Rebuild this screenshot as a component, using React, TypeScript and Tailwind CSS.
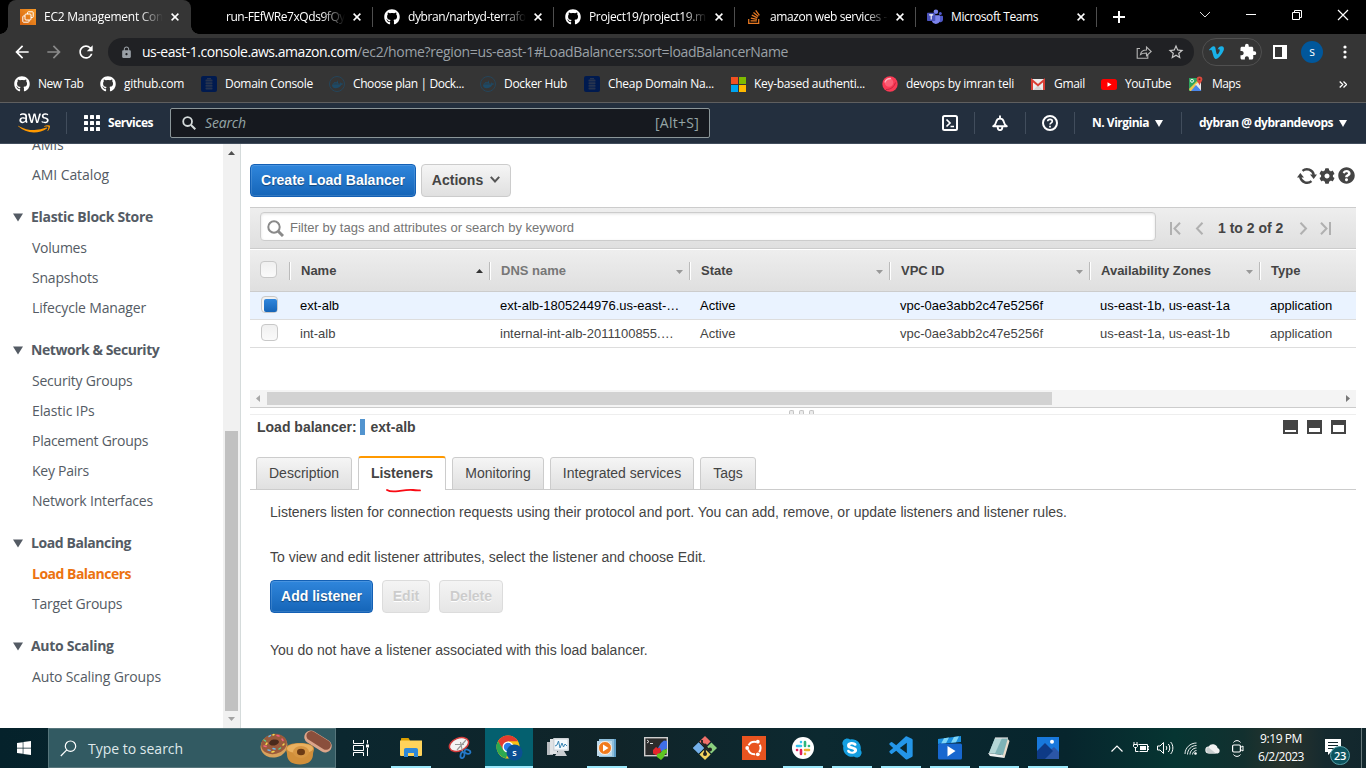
import React from "react";
import { FaGithub, FaAws, FaStackOverflow, FaDocker, FaVimeoV, FaSkype, FaCog, FaQuestionCircle, FaWindows } from "react-icons/fa";
import { MdArrowBack, MdArrowForward, MdRefresh, MdLock, MdStarBorder, MdExtension } from "react-icons/md";
import { BiLogoVisualStudio } from "react-icons/bi";

const ui = "font-['Open_Sans','Noto_Sans',sans-serif]";

/* ---------- small drawings ---------- */

const Ec2Icon = () => (
  <svg className="w-4 h-4" viewBox="0 0 16 16">
    <defs>
      <linearGradient id="ec2" x1="0" y1="1" x2="1" y2="0">
        <stop offset="0" stopColor="#d4620f" />
        <stop offset="1" stopColor="#f79a28" />
      </linearGradient>
    </defs>
    <rect width="16" height="16" fill="url(#ec2)" />
    <g fill="none" stroke="#fff" strokeWidth="1">
      <path d="M5 7H3.500a.7.7 0 0 0-.7.7v4.800c0 .4.3.7.7.7h4.800c.4 0 .7-.3.7-.7V11" />
      <rect x="5" y="5" width="6" height="6" rx="1" />
      <path d="M7.500 5V3.500c0-.4.3-.7.7-.7h4.300c.4 0 .7.3.7.7v4.300c0 .4-.3.7-.7.7H11" />
    </g>
  </svg>
);

const TeamsIcon = () => (
  <svg className="w-4 h-4" viewBox="0 0 16 16">
    <circle cx="13.3" cy="4.6" r="1.5" fill="#5059c9" />
    <path d="M11 6.7h4.2c.4 0 .8.3.8.8v3.2a2.6 2.6 0 0 1-4.6 1.6Z" fill="#5059c9" />
    <circle cx="8.9" cy="2.8" r="2.3" fill="#7b83eb" />
    <path d="M5 6.3h7.3c.4 0 .7.3.7.7v4.6a4.2 4.2 0 0 1-8.2 0Z" fill="#7b83eb" />
    <rect x="0" y="3.8" width="8.3" height="8.3" rx=".8" fill="#4b53bc" />
    <path d="M2.2 5.9h4M4.2 5.9v4.5" stroke="#fff" strokeWidth="1.1" />
  </svg>
);

const DatabaseIcon = () => (
  <svg className="w-4 h-4" viewBox="0 0 16 16">
    <rect width="16" height="16" rx="2" fill="#001a4f" />
    <g fill="#27344f">
      <rect x="6" y="2" width="4" height="1.4" />
      <rect x="4.5" y="3.6" width="7" height="2" rx=".6" />
      <rect x="4.5" y="6.2" width="7" height="2" rx=".6" />
      <rect x="4.5" y="8.8" width="7" height="2" rx=".6" />
      <rect x="4.5" y="11.4" width="7" height="2" rx=".6" />
    </g>
  </svg>
);

const DockerIcon = () => (
  <span className="flex w-4 h-4 items-center justify-center rounded-full border border-[#25455a]">
    <FaDocker className="w-[11px] h-[11px] text-[#1e4a66]" />
  </span>
);

const MicrosoftIcon = () => (
  <span className="grid w-[15px] h-[15px] grid-cols-2 gap-px">
    <i className="bg-[#f25022]" /><i className="bg-[#7fba00]" />
    <i className="bg-[#00a4ef]" /><i className="bg-[#ffb900]" />
  </span>
);

const BallIcon = () => (
  <svg className="w-4 h-4" viewBox="0 0 16 16">
    <circle cx="8" cy="8" r="7.7" fill="#fb3a55" />
    <path d="M4 13.500c5 0 8-2.500 9.500-7" stroke="#c21f3e" strokeWidth=".9" fill="none" />
    <circle cx="7" cy="6.500" r="4.300" fill="#fd5f76" />
    <path d="M3 6C4 3.500 6 2.500 8.500 2.500" stroke="#ffb0bb" strokeWidth="1.300" fill="none" strokeLinecap="round" />
  </svg>
);

const GmailIcon = () => (
  <svg className="w-[14px] h-3" viewBox="0 0 14 12">
    <rect y="1" width="14" height="11" rx="1" fill="#ececec" />
    <path d="M2.500 12 7 7l4.500 5Z" fill="#d4d4d4" />
    <path d="M1 12V2.200l6 5 6-5V12" fill="none" stroke="#d93f35" strokeWidth="2" />
  </svg>
);

const YoutubeIcon = () => (
  <svg className="h-[11px] w-4" viewBox="0 0 16 11">
    <rect width="16" height="11" rx="2.500" fill="#f00" />
    <path d="m6.500 3.200 4 2.300-4 2.300Z" fill="#fff" />
  </svg>
);

const MapsIcon = () => (
  <svg className="w-4 h-4" viewBox="0 0 16 16">
    <path d="M1 2h10v6L3 15H1Z" fill="#2fa45f" />
    <path d="M1 13 9 5l2 3-7 7H2Z" fill="#f0c64b" />
    <path d="m7 9 6-5v11Z" fill="#e8e8e8" />
    <path d="M8 9 13.500 15H3Z" fill="#4a86ea" />
    <circle cx="4" cy="4.800" r="1.500" fill="none" stroke="#fff" strokeWidth=".9" />
    <path d="M11.500 9.500C11 7 8.600 5.500 8.600 3.300a2.900 2.900 0 0 1 5.800 0c0 2.200-2.400 3.700-2.900 6.200Z" fill="#dd4b3e" />
    <circle cx="11.500" cy="3.200" r="1" fill="#7d2017" />
  </svg>
);

const TabClose = () => (
  <svg className="w-2 h-2 shrink-0" viewBox="0 0 8 8">
    <path d="m.6.6 6.800 6.800M7.400.6.6 7.400" stroke="#fff" strokeWidth="1.500" />
  </svg>
);

const Caret = ({ className }: { className: string }) => (
  <svg className={`w-2 h-[7px] ${className}`} viewBox="0 0 8 7">
    <path d="M0 0h8L4 7Z" fill="currentColor" />
  </svg>
);

/* ---------- browser chrome ---------- */

const tabs = [
  { icon: null, text: "run-FEfWRe7xQds9fQy", track: "tracking-[-0.45px]" },
  { icon: <FaGithub className="w-4 h-4" />, text: "dybran/narbyd-terrafo", track: "tracking-[-0.4px]" },
  { icon: <FaGithub className="w-4 h-4" />, text: "Project19/project19.m", track: "tracking-[-0.37px]" },
  { icon: <FaStackOverflow className="w-4 h-4 text-[#e87922]" />, text: "amazon web services -", track: "tracking-[-0.42px]" },
  { icon: <TeamsIcon />, text: "Microsoft Teams", track: "tracking-[-0.39px]" },
];

const fade = "[mask-image:linear-gradient(to_right,#000_80%,transparent)]";

function TabStrip() {
  return (
    <div className="flex h-[34px] bg-black pl-2 text-xs text-white">
      <div className="relative flex w-[183px] items-center rounded-t-lg bg-[#353535] pl-3">
        <Ec2Icon />
        <span className={`ml-2 w-[119px] overflow-hidden whitespace-nowrap tracking-[-0.25px] ${fade}`}>EC2 Management Con</span>
        <span className="ml-2 flex"><TabClose /></span>
        <i className="absolute -left-2 bottom-0 h-2 w-2 bg-[radial-gradient(circle_at_0_0,#000_7.5px,#353535_8px)]" />
        <i className="absolute -right-2 bottom-0 h-2 w-2 bg-[radial-gradient(circle_at_100%_0,#000_7.5px,#353535_8px)]" />
      </div>
      {tabs.map((t, i) => (
        <div key={t.text} className={`flex items-center pl-[11px] ${i ? "w-[181px]" : "w-[182px]"}`}>
          <span className="flex w-4 justify-center">{t.icon}</span>
          <span className={`ml-2 overflow-hidden whitespace-nowrap ${i ? "w-[118px]" : "w-[119px]"} ${t.track} ${i < 4 ? fade : ""}`}>{t.text}</span>
          <span className="ml-2 flex"><TabClose /></span>
          <i className="ml-auto h-5 w-px bg-[#4e4e4e]" />
        </div>
      ))}
      <svg className="ml-4 mt-[11px] h-3 w-3" viewBox="0 0 12 12">
        <path d="M6 0v12M0 6h12" stroke="#fff" strokeWidth="2" />
      </svg>
      <div className="ml-auto flex gap-[34px] pr-[17px] pt-[9px]">
        <svg className="h-3 w-3" viewBox="0 0 12 12"><path d="m1 3 5 5 5-5" stroke="#ddd" fill="none" /></svg>
        <svg className="h-3 w-3" viewBox="0 0 12 12"><path d="M1 5.500h10" stroke="#fff" /></svg>
        <svg className="h-3 w-3" viewBox="0 0 12 12"><path d="M1.500 3.500h7v7h-7ZM3.500 3.500v-2h7v7h-2" stroke="#fff" fill="none" /></svg>
        <svg className="h-3 w-3" viewBox="0 0 12 12"><path d="m1 1 10 10M11 1 1 11" stroke="#fff" strokeWidth="1.200" /></svg>
      </div>
    </div>
  );
}

function Toolbar() {
  return (
    <div className="flex h-9 items-center bg-[#353535] text-white">
      <div className="flex w-[108px] items-center pl-3">
        <MdArrowBack className="h-5 w-5" />
        <MdArrowForward className="ml-3 h-5 w-5 text-[#8a8a8a]" />
        <MdRefresh className="ml-3 h-5 w-5" />
      </div>
      <div className="flex h-7 w-[1086px] items-center rounded-full bg-[#202124] pl-3 text-sm whitespace-nowrap">
        <MdLock className="h-[13px] w-[13px] text-[#9aa0a6]" />
        <span className="ml-[9px] w-[215px] tracking-[-0.47px]">us-east-1.console.aws.amazon.com</span>
        <span className="tracking-[-0.35px] text-[#9aa0a6]">/ec2/home?region=us-east-1#LoadBalancers:sort=loadBalancerName</span>
        <svg className="ml-auto h-4 w-4" viewBox="0 0 16 16">
          <path d="M4 4.500H1.200v9.800h10.600V11M4.500 10.500C5 7.500 7 6 10.500 6V3l4.700 4.500-4.700 4.200V9C8 9 6 9.300 4.500 10.500Z" stroke="#b5b5b5" strokeWidth="1.100" fill="none" />
        </svg>
        <MdStarBorder className="ml-[15px] mr-[9px] h-[18px] w-[18px] text-[#c8c8c8]" />
      </div>
      <div className="ml-2 flex h-7 w-[60px] items-center justify-between rounded-full border border-[#505050] pl-[5px] pr-1">
        <FaVimeoV className="h-[17px] w-[17px] text-[#19b1e8]" />
        <MdExtension className="h-[18px] w-[18px]" />
      </div>
      <span className="ml-[11px] h-[14px] w-[14px] border-2 border-r-[5px] border-white" />
      <span className="ml-[14px] flex h-[22px] w-[22px] items-center justify-center rounded-full bg-[#01579b] pb-px text-xs leading-none">s</span>
      <svg className="ml-5 h-[14px] w-1" viewBox="0 0 4 14">
        <g fill="#fff"><circle cx="2" cy="2" r="1.600" /><circle cx="2" cy="7" r="1.600" /><circle cx="2" cy="12" r="1.600" /></g>
      </svg>
    </div>
  );
}

const bookmarks = [
  { w: "w-[86px]", t: "tracking-[-0.5px]", icon: <FaGithub className="h-4 w-4" />, text: "New Tab" },
  { w: "w-[101px]", t: "tracking-[-0.31px]", icon: <FaGithub className="h-4 w-4" />, text: "github.com" },
  { w: "w-[128px]", t: "tracking-[-0.29px]", icon: <DatabaseIcon />, text: "Domain Console" },
  { w: "w-[151px]", t: "tracking-[-0.41px]", icon: <DockerIcon />, text: "Choose plan | Dock..." },
  { w: "w-[104px]", t: "tracking-[-0.33px]", icon: <DockerIcon />, text: "Docker Hub" },
  { w: "w-[146px]", t: "tracking-[-0.29px]", icon: <DatabaseIcon />, text: "Cheap Domain Na..." },
  { w: "w-[152px]", t: "tracking-[-0.31px]", icon: <MicrosoftIcon />, text: "Key-based authenti..." },
  { w: "w-[148px]", t: "tracking-[-0.26px]", icon: <BallIcon />, text: "devops by imran teli" },
  { w: "w-[71px]", t: "tracking-[-0.31px]", icon: <GmailIcon />, text: "Gmail" },
  { w: "w-[87px]", t: "tracking-[-0.48px]", icon: <YoutubeIcon />, text: "YouTube" },
  { w: "w-[80px]", t: "tracking-[-0.55px]", icon: <MapsIcon />, text: "Maps" },
];

function Bookmarks() {
  return (
    <div className="flex h-[33px] items-center border-b border-[#5f5f5f] bg-[#353535] pb-[4px] pl-[14px] text-xs text-white">
      {bookmarks.map((b) => (
        <div key={b.text} className={`flex shrink-0 items-center gap-2 whitespace-nowrap ${b.w}`}>
          <span className="flex w-4 justify-center">{b.icon}</span>
          <span className={b.t}>{b.text}</span>
        </div>
      ))}
      <svg className="ml-auto mr-[19px] h-[7px] w-2" viewBox="0 0 8 7">
        <path d="m.7.5 3 3-3 3M4.500.5l3 3-3 3" stroke="#fff" strokeWidth="1.300" fill="none" />
      </svg>
    </div>
  );
}

/* ---------- AWS header ---------- */

function AwsHeader() {
  return (
    <div className="flex h-[41px] items-center border-b border-[#414d5c] bg-[#232f3e] text-xs font-bold whitespace-nowrap text-white">
      <div className="ml-[18px] flex w-8 flex-col">
        <div className="h-[15px] overflow-hidden"><FaAws className="h-[25.6px] w-8" /></div>
        <div className="flex h-[11px] flex-col justify-end overflow-hidden text-[#ff9900]"><FaAws className="h-[25.6px] w-8 shrink-0" /></div>
      </div>
      <i className="ml-4 h-[22px] w-px bg-[#414d5c]" />
      <div className="ml-[17px] grid grid-cols-3 gap-[2px]">
        {Array.from({ length: 9 }, (_, i) => <i key={i} className="h-1 w-1 rounded-[0.5px] bg-white" />)}
      </div>
      <span className="ml-2 w-[46px] tracking-[-0.48px]">Services</span>
      <div className="ml-4 flex h-[30px] w-[540px] items-center rounded-[2px] border border-[#8b9699] bg-[#16191f] pl-[11px] pr-[10px] text-sm font-normal text-[#95a5a6]">
        <svg className="h-[14px] w-[14px]" viewBox="0 0 14 14">
          <path d="M9 9l4.300 4.300" stroke="#d5dbdb" strokeWidth="2" /><circle cx="5.600" cy="5.600" r="4.400" stroke="#d5dbdb" strokeWidth="1.800" fill="none" />
        </svg>
        <span className="ml-[9px] italic tracking-[-0.15px]">Search</span>
        <span className="ml-auto tracking-[0.25px]">[Alt+S]</span>
      </div>
      <svg className="ml-[232px] h-4 w-4" viewBox="0 0 16 16">
        <rect x="1" y="1" width="14" height="14" rx="1.500" stroke="#fff" strokeWidth="2" fill="none" />
        <path d="m4.500 4.500 3.500 3.500-3.500 3.500M8.500 11.500h3.500" stroke="#fff" strokeWidth="1.700" fill="none" />
      </svg>
      <i className="ml-4 h-[22px] w-px bg-[#414d5c]" />
      <svg className="ml-[17px] h-4 w-4" viewBox="0 0 16 16">
        <path d="M1.200 11.300h13.600c-2.600-1.800-2.800-3-3.200-5C11.200 4.500 10 3.600 8 3.600S4.800 4.500 4.400 6.300c-.4 2-.6 3.200-3.200 5Z" stroke="#fff" strokeWidth="1.900" fill="none" strokeLinejoin="round" />
        <path d="M8 3.500V.5M5.700 12c0 4.200 4.600 4.200 4.600 0" stroke="#fff" strokeWidth="1.900" fill="none" />
      </svg>
      <i className="ml-[17px] h-[22px] w-px bg-[#414d5c]" />
      <svg className="ml-4 h-4 w-4" viewBox="0 0 16 16">
        <circle cx="8" cy="8" r="7" stroke="#fff" strokeWidth="2" fill="none" />
        <path d="M5.700 6.300C5.700 3.600 10.300 3.600 10.300 6.300 10.300 7.900 8 7.800 8 9.600M8 10.700v1.700" stroke="#fff" strokeWidth="1.700" fill="none" />
      </svg>
      <i className="ml-4 h-[22px] w-px bg-[#414d5c]" />
      <span className="ml-[17px] w-[58px] tracking-[-0.49px]">N. Virginia</span>
      <Caret className="ml-[5px] text-white" />
      <i className="ml-[18px] h-[22px] w-px bg-[#414d5c]" />
      <span className="ml-[17px] w-[135px] tracking-[-0.51px]">dybran @ dybrandevops</span>
      <Caret className="ml-[5px] text-white" />
    </div>
  );
}

/* ---------- side navigation ---------- */

const groups = [
  { title: "", items: [["AMIs", "tracking-[-0.1px]"], ["AMI Catalog", "tracking-[-0.08px]"]] },
  { title: "Elastic Block Store", track: "tracking-[-0.3px]", items: [["Volumes", "tracking-[-0.25px]"], ["Snapshots", "tracking-[-0.2px]"], ["Lifecycle Manager", "tracking-[-0.16px]"]] },
  { title: "Network & Security", track: "tracking-[-0.44px]", items: [["Security Groups", "tracking-[-0.22px]"], ["Elastic IPs", "tracking-[-0.1px]"], ["Placement Groups", "tracking-[-0.27px]"], ["Key Pairs", "tracking-[-0.27px]"], ["Network Interfaces", "tracking-[-0.18px]"]] },
  { title: "Load Balancing", track: "tracking-[-0.42px]", items: [["Load Balancers", "tracking-[-0.51px]"], ["Target Groups", "tracking-[-0.25px]"]] },
  { title: "Auto Scaling", track: "tracking-[-0.3px]", items: [["Auto Scaling Groups", "tracking-[-0.14px]"]] },
];

function SideNav() {
  return (
    <div className="flex h-full w-[241px] shrink-0 overflow-hidden border-r border-[#d5dbdb]">
      <nav className="-mt-[14px] w-[223px] text-sm leading-[30px] text-[#545b64]">
        {groups.map((g) => (
          <div key={g.title}>
            {g.title && (
              <div className="flex h-[43px] items-center pl-[13px] pt-[11px] font-bold">
                <svg className="h-[9px] w-[10px]" viewBox="0 0 10 9"><path d="M0 .5h10L5 8.500Z" fill="#545b64" /></svg>
                <span className={`ml-2 ${g.track}`}>{g.title}</span>
              </div>
            )}
            {g.items.map(([t, track]) => (
              <div key={t} className={`h-[30px] pl-8 ${track} ${t === "Load Balancers" ? "font-bold text-[#ec7211]" : ""}`}>{t}</div>
            ))}
          </div>
        ))}
      </nav>
      <div className="flex w-[17px] flex-col items-center bg-[#f1f1f1]">
        <svg className="mt-[7px] h-1 w-[7px]" viewBox="0 0 7 4"><path d="M0 4h7L3.500 0Z" fill="#505050" /></svg>
        <i className="mt-[276px] h-[280px] w-[13px] bg-[#c1c1c1]" />
        <svg className="mt-[6px] h-1 w-[7px]" viewBox="0 0 7 4"><path d="M0 0h7L3.500 4Z" fill="#a3a3a3" /></svg>
      </div>
    </div>
  );
}

/* ---------- main panel ---------- */

const blueBtn = "flex h-[33px] items-center justify-center rounded-[4px] border border-[#1360b5] bg-linear-to-b from-[#2f86dc] to-[#1565b8] pb-[2px] text-sm font-bold text-white shadow-[inset_0_0_0_1px_rgba(255,255,255,0.12)] [text-shadow:0_1px_1px_rgba(0,0,0,0.4)]";
const grayBtn = "flex h-[33px] items-center justify-center rounded-[4px] border border-[#ccc] bg-linear-to-b from-[#f5f5f5] to-[#e0e0e0] pb-[2px] text-sm font-bold text-[#444]";
const offBtn = "flex h-[33px] items-center justify-center rounded-[4px] border border-[#dcdcdc] bg-linear-to-b from-[#f4f4f4] to-[#e6e6e6] pb-[2px] text-sm font-bold text-[#ccc] [text-shadow:0_1px_0_#fff]";

const columns = [
  { w: "w-[200px]", t: "Name", c: "text-[#444]", sort: "up" },
  { w: "w-[200px]", t: "DNS name", c: "text-[#777]", sort: "down" },
  { w: "w-[200px]", t: "State", c: "text-[#444]", sort: "down" },
  { w: "w-[200px]", t: "VPC ID", c: "text-[#444]", sort: "down" },
  { w: "w-[170px]", t: "Availability Zones", c: "text-[#444]", sort: "down" },
  { w: "w-[95px]", t: "Type", c: "text-[#444]", sort: "" },
];

const rows = [
  { on: true, cells: ["ext-alb", "ext-alb-1805244976.us-east-…", "Active", "vpc-0ae3abb2c47e5256f", "us-east-1b, us-east-1a", "application"] },
  { on: false, cells: ["int-alb", "internal-int-alb-2011100855.…", "Active", "vpc-0ae3abb2c47e5256f", "us-east-1a, us-east-1b", "application"] },
];

const checkbox = "flex h-[17px] w-[17px] items-center justify-center rounded-[4px] border border-[#c8c8c8] bg-linear-to-b from-[#f0f0f0] to-[#fafafa]";

function ResourceTable() {
  return (
    <div className="mt-[10px] w-[1106px] text-[13px] leading-4">
      <div className="flex h-[42px] items-start border-y border-[#ccc] bg-linear-to-b from-[#eee] to-[#dfdfdf] pl-[10px] pt-[4px]">
        <div className="flex h-[29px] w-[896px] items-center rounded-[4px] border border-[#ccc] bg-white pl-[6px] text-[#757575] shadow-[inset_0_1px_3px_rgba(0,0,0,0.12)]">
          <svg className="mt-[3px] h-[17px] w-[17px]" viewBox="0 0 17 17">
            <circle cx="7" cy="7" r="5.700" stroke="#8a8a8a" strokeWidth="2" fill="none" />
            <path d="m11.200 11.200 4.800 4.800" stroke="#8a8a8a" strokeWidth="3" />
          </svg>
          <span className="ml-[6px] pt-[2px]">Filter by tags and attributes or search by keyword</span>
        </div>
        <div className="mt-[2px] flex h-7 items-center pl-[14px] text-sm font-bold text-[#444]">
          <svg className="h-[13px] w-[11px]" viewBox="0 0 11 13"><path d="M1 0v13M10 .8 4.500 6.500l5.500 5.700" stroke="#b0b0b0" strokeWidth="2" fill="none" /></svg>
          <svg className="ml-[14px] h-[13px] w-[9px]" viewBox="0 0 9 13"><path d="M7.500.8 2 6.500l5.500 5.700" stroke="#b0b0b0" strokeWidth="2" fill="none" /></svg>
          <span className="ml-[14px] w-[66px]">1 to 2 of 2</span>
          <svg className="ml-[15px] h-[13px] w-[9px]" viewBox="0 0 9 13"><path d="M1.500.8 7 6.500 1.500 12.200" stroke="#b0b0b0" strokeWidth="2" fill="none" /></svg>
          <svg className="ml-3 h-[13px] w-[11px]" viewBox="0 0 11 13"><path d="M10 0v13M1 .8l5.500 5.700L1 12.200" stroke="#b0b0b0" strokeWidth="2" fill="none" /></svg>
        </div>
      </div>
      <div className="mt-px flex h-[42px] items-center border-b border-[#ccc] bg-linear-to-b from-[#eee] to-[#dfdfdf] font-bold">
        <div className="flex w-[41px] items-center pl-[10px]">
          <span className={`mb-[2px] ${checkbox}`} />
          <i className="ml-auto h-[18px] w-[2px] border-l border-[#bbb] bg-white" />
        </div>
        {columns.map((col) => (
          <div key={col.t} className={`flex items-center pl-[10px] ${col.w} ${col.c}`}>
            <span>{col.t}</span>
            {col.sort && (
              <svg className={`ml-auto h-1 w-[7px] ${col.sort === "up" ? "text-[#333]" : "mt-[2px] text-[#999]"}`} viewBox="0 0 7 4">
                <path d={col.sort === "up" ? "M0 4h7L3.500 0Z" : "M0 0h7L3.500 4Z"} fill="currentColor" />
              </svg>
            )}
            {col.sort && <i className="ml-[6px] h-[18px] w-[2px] border-l border-[#bbb] bg-white" />}
          </div>
        ))}
      </div>
      {rows.map((r) => (
        <div key={r.cells[0]} className={`flex h-7 items-center border-b border-[#ddd] ${r.on ? "bg-[#eaf3ff] text-black" : "bg-white text-[#444]"}`}>
          <div className="w-10 pb-[2px] pl-[11px]">
            <span className={checkbox}>{r.on && <i className="ml-px mt-px h-[13px] w-[13px] rounded-[2px] bg-linear-to-b from-[#2f86dc] to-[#1565b8]" />}</span>
          </div>
          {r.cells.map((c, i) => (
            <div key={i} className={`pl-[10px] whitespace-nowrap ${columns[i].w}`}>{c}</div>
          ))}
        </div>
      ))}
      <div className="mt-[42px] flex h-[18px] items-center border-b border-[#ccc] bg-[#f4f4f4]">
        <svg className="ml-[6px] h-[7px] w-1" viewBox="0 0 4 7"><path d="M4 0v7L0 3.500Z" fill="#a8a8a8" /></svg>
        <i className="ml-[7px] h-[13px] w-[785px] bg-[#d2d2d2]" />
        <svg className="ml-auto mr-[6px] h-[7px] w-1" viewBox="0 0 4 7"><path d="M0 0v7l4-3.500Z" fill="#777" /></svg>
      </div>
    </div>
  );
}

const PaneIcon = ({ d }: { d: string }) => (
  <svg className="h-[14px] w-[15px]" viewBox="0 0 15 14"><rect width="15" height="14" fill="#444" /><path d={d} fill="#fff" /></svg>
);

const detailTabs = [
  { t: "Description", w: "w-24" },
  { t: "Listeners", w: "w-[88px]", active: true },
  { t: "Monitoring", w: "w-[92px]" },
  { t: "Integrated services", w: "w-36" },
  { t: "Tags", w: "w-14" },
];

function Details() {
  return (
    <div className="w-[1106px] text-sm leading-4 text-[#444]">
      <div className="flex h-[7px] items-end justify-center gap-[5px] border-b border-[#eee] pr-[3px]">
        {[0, 1, 2].map((i) => <i key={i} className="h-1 w-[5px] rounded-t-[2px] border border-b-0 border-[#c4c4c4] bg-[#ececec]" />)}
      </div>
      <div className="flex h-[23px] items-center pl-[7px] font-bold">
        <span className="w-[103px]">Load balancer:</span>
        <i className="h-4 w-[5px] bg-[#5294cf]" />
        <span className="ml-[5.5px]">ext-alb</span>
        <div className="ml-auto mr-[10px] flex gap-[9px]">
          <PaneIcon d="M2 10h11v2H2Z" /><PaneIcon d="M2 8h11v4H2Z" /><PaneIcon d="M2 5h11v7H2Z" />
        </div>
      </div>
      <div className="mt-[18px] flex h-[34px] items-end gap-[6px] bg-[linear-gradient(#ccc,#ccc)] bg-[length:100%_1px] bg-bottom bg-no-repeat pl-[6px]">
        {detailTabs.map((t) =>
          t.active ? (
            <div key={t.t} className={`relative flex h-[34px] items-center justify-center rounded-t-[3px] border-x border-t-2 border-x-[#ccc] border-t-[#f90] bg-white pb-[3px] font-bold ${t.w}`}>
              {t.t}
              <svg className="absolute -bottom-[3px] left-[27px] h-[6px] w-9" viewBox="0 0 36 6">
                <path d="M1 3c4 2.500 8 1.500 13 .8s10-1.300 13-.8 5 .3 7 .4" stroke="#f90b14" strokeWidth="1.800" fill="none" strokeLinecap="round" />
              </svg>
            </div>
          ) : (
            <div key={t.t} className={`flex h-[33px] items-center justify-center rounded-t-[3px] border border-[#ccc] bg-linear-to-b from-[#f5f5f5] to-[#e0e0e0] pb-[2px] ${t.w}`}>{t.t}</div>
          )
        )}
      </div>
      <div className="pl-5 pt-[14px]">
        <p>Listeners listen for connection requests using their protocol and port. You can add, remove, or update listeners and listener rules.</p>
        <p className="mt-[29px]">To view and edit listener attributes, select the listener and choose Edit.</p>
        <div className="mt-[15px] flex gap-[9px]">
          <div className={`w-[103px] ${blueBtn}`}>Add listener</div>
          <div className={`w-12 ${offBtn}`}>Edit</div>
          <div className={`w-16 ${offBtn}`}>Delete</div>
        </div>
        <p className="mt-[29px]">You do not have a listener associated with this load balancer.</p>
      </div>
    </div>
  );
}

function Main() {
  return (
    <main className="flex-1 pl-[9px] pt-5 font-['Liberation_Sans',Arial,sans-serif]">
      <div className="flex h-[33px] w-[1106px]">
        <div className={`w-[166px] ${blueBtn}`}>Create Load Balancer</div>
        <div className={`ml-[5px] w-[90px] ${grayBtn}`}>
          Actions
          <svg className="ml-[7px] h-[7px] w-[10px]" viewBox="0 0 10 7"><path d="m.8.8 4.200 4.700L9.200.8" stroke="#555" strokeWidth="2" fill="none" /></svg>
        </div>
        <div className="ml-auto mr-px flex h-[23px] items-center text-[#444]">
          <svg className="h-[18px] w-5" viewBox="0 0 20 18">
            <path d="M5.500 3.900A7 7 0 0 1 16.800 8M14.500 14.100A7 7 0 0 1 3.200 10" stroke="#444" strokeWidth="2.400" fill="none" />
            <path d="M13 7.500h7L16.700 12ZM0 10.500h7L3.300 6Z" fill="#444" />
          </svg>
          <FaCog className="ml-[2px] h-4 w-4" />
          <FaQuestionCircle className="ml-[3px] h-[17px] w-[17px]" />
        </div>
      </div>
      <ResourceTable />
      <Details />
    </main>
  );
}

/* ---------- taskbar ---------- */

const Donuts = () => (
  <svg className="h-9 w-[74px]" viewBox="0 0 74 36">
    <ellipse cx="15" cy="16" rx="13.500" ry="11.500" fill="#d8a25c" transform="rotate(-12 15 16)" />
    <ellipse cx="15" cy="14" rx="13" ry="10" fill="#9a5a3c" transform="rotate(-12 15 14)" />
    <ellipse cx="15" cy="12.500" rx="5" ry="3" fill="#4a2a1c" transform="rotate(-12 15 12.500)" />
    <g strokeWidth="1.500" strokeLinecap="round">
      <path d="m5 10 1.500 1M20 19l1.500-1" stroke="#5fd08a" />
      <path d="m5 16 2 .5M18 5.500l2 .5M23 9l1 1.500" stroke="#f2607e" />
      <path d="m9 20 2 .5M10 6.500l1.500-1M14 18.500l2 .5" stroke="#6ab8e8" />
      <path d="m13 22 2-.5M24 15l1-1M8 13l-1 1.500M14 5l1-.5" stroke="#f5d84f" />
    </g>
    <rect x="44" y="5" width="30" height="13" rx="6.500" fill="#dca58a" transform="rotate(32 59 11.500)" />
    <rect x="45.500" y="5.500" width="27" height="9.500" rx="4.700" fill="#8a4f3c" transform="rotate(32 59 11.500)" />
    <path d="M27 19c0-4 6-6 14-6s14 2 14 6c0 2-1 3-1 5 0 7-5 10.500-13 10.500S28 31 28 24c0-2-1-3-1-5Z" fill="#d18f3a" />
    <ellipse cx="41" cy="18.500" rx="13" ry="5" fill="#e9b160" />
    <ellipse cx="42" cy="22" rx="8" ry="6" fill="#d69643" />
    <ellipse cx="42" cy="22" rx="4" ry="3.200" fill="#6b3a14" />
  </svg>
);

const TaskViewIcon = () => (
  <svg className="h-4 w-[17px]" viewBox="0 0 17 16">
    <path d="M.5 0v3.500h10V0M.5 16v-3.500h10V16M.5 5.500h10v5H.5ZM14.500 0v3.500M14.500 8v8" stroke="#fff" fill="none" />
    <rect x="13" y="4.500" width="3" height="3" fill="#fff" />
  </svg>
);

const ExplorerIcon = () => (
  <svg className="h-[19px] w-[22px]" viewBox="0 0 22 19">
    <path d="M1 1c0-.6.4-1 1-1h6.500l1.500 2.500V5H1Z" fill="#dca000" />
    <path d="M0 2.500h22V17a1 1 0 0 1-1 1H1a1 1 0 0 1-1-1Z" fill="#ffd35b" />
    <path d="M4 12c0-1.200.6-2 2-2h10c1.400 0 2 .8 2 2v7h-4v-4H8v4H4Z" fill="#2f88d8" />
  </svg>
);

const SnipIcon = () => (
  <svg className="h-6 w-6" viewBox="0 0 24 24">
    <ellipse cx="11" cy="8.500" rx="10" ry="6.300" fill="#f4f4f4" stroke="#d23b3b" strokeWidth="1.500" transform="rotate(-22 11 8.500)" />
    <path d="M7 8.500h9M12.500 6l2 10M18 4 9 14" stroke="#999" strokeWidth="1.200" />
    <ellipse cx="19.500" cy="15.500" rx="3" ry="2" fill="none" stroke="#2478c8" strokeWidth="1.800" transform="rotate(20 19 15.500)" />
    <ellipse cx="14.500" cy="19" rx="1.900" ry="3" fill="none" stroke="#2478c8" strokeWidth="1.800" transform="rotate(15 14 19)" />
  </svg>
);

const ChromeIcon = () => (
  <svg className="h-[26px] w-[27px]" viewBox="0 0 27 26">
    <circle cx="12" cy="12" r="11.500" fill="#fbc116" />
    <path d="M2 6.300A11.500 11.500 0 0 1 22 6.300H12L7 14.800Z" fill="#e33b2e" />
    <path d="M2 6.300 7.400 15 12 17.500 10 23.300A11.500 11.500 0 0 1 2 6.300Z" fill="#2da94f" />
    <circle cx="12" cy="12" r="5.500" fill="#fff" /><circle cx="12" cy="12" r="4.200" fill="#2b7de9" />
    <circle cx="18.500" cy="17.500" r="8" fill="#0b4f93" />
    <text x="18.500" y="20.500" textAnchor="middle" fontSize="9" fontWeight="600" fill="#fff">s</text>
  </svg>
);

const MonitorIcon = () => (
  <svg className="h-[22px] w-6" viewBox="0 0 24 22">
    <path d="M1 5h6v13H1Z" fill="#b8bcc0" /><path d="M4 2h7v15H4Z" fill="#e0e3e5" />
    <rect x="7" y="1" width="16" height="13" rx="1" fill="#cfd4d8" /><rect x="8.500" y="2.500" width="13" height="10" fill="#f4fafd" />
    <path d="m9 9 2-1 1.500-4L14 11l2-5 1.500 4L19 7l2 2" stroke="#3b87b5" fill="none" />
    <path d="M12 14h6l3 5H9Z" fill="#c9cdd0" />
  </svg>
);

const PlayerIcon = () => (
  <svg className="h-5 w-5" viewBox="0 0 20 20">
    <path d="M5 1h14v18H5Z" fill="#5c9cc6" /><path d="M2 1h15v18H2Z" fill="#8fbfdc" /><rect x="0" y="3" width="15" height="15" fill="#bcd9ea" />
    <circle cx="8" cy="10" r="6.500" fill="#f07a1c" stroke="#fff" strokeWidth=".8" /><path d="m6 6.500 5.500 3.500L6 13.500Z" fill="#fff" />
  </svg>
);

const ConsoleIcon = () => (
  <svg className="h-6 w-6" viewBox="0 0 24 24">
    <rect x=".7" y="1.700" width="22.600" height="18" fill="#2c2c2c" stroke="#cfcfcf" strokeWidth="1.400" />
    <path d="m3 4 2 1.500L3 7M6 7.500h3" stroke="#ddd" fill="none" />
    <path d="m14 12 3-5 3-2.500 3 .5v7l-5 4Z" fill="#3f6fe8" />
    <path d="M9 14 12 11l2 1.500 2-1 1 4-4 4-4-2Z" fill="#e5262c" />
    <path d="m13 18 3-1 3-3 4-1v4l-2 1-1 3-3 3-4-3Z" fill="#5ec522" />
  </svg>
);

const GitIcon = () => (
  <svg className="h-6 w-6" viewBox="0 0 24 24">
    <path d="m12 0 5.600 5.600L12 11 6.400 5.600Z" fill="#f0706a" /><path d="m5.600 6.400L11 12l-5.400 5.600L0 12Z" fill="#74b0ea" />
    <path d="M5.600 6.400 11 12l-5.400 5.600L0 12Z" fill="#74b0ea" />
    <path d="M18.400 6.400 24 12l-5.600 5.600L13 12Z" fill="#8bd07f" /><path d="m12 13 5.600 5.500L12 24l-5.600-5.500Z" fill="#f4d45f" />
    <path d="M9 4v3l3 3v8M12 10l5 5" stroke="#222" strokeWidth="1.800" fill="none" />
    <circle cx="12" cy="9.500" r="2" fill="#222" /><circle cx="12" cy="18" r="2" fill="#222" /><circle cx="17" cy="13.500" r="2" fill="#222" />
  </svg>
);

const UbuntuIcon = () => (
  <svg className="h-6 w-6" viewBox="0 0 24 24">
    <rect width="24" height="24" fill="#e95420" />
    <circle cx="12.300" cy="12" r="6.300" stroke="#fff" strokeWidth="2" fill="none" strokeDasharray="8.800 4.400" strokeDashoffset="-8.800" />
    <circle cx="5.200" cy="12" r="1.900" fill="#fff" /><circle cx="15.800" cy="5.700" r="1.900" fill="#fff" /><circle cx="15.800" cy="18.300" r="1.900" fill="#fff" />
  </svg>
);

const SlackIcon = () => (
  <svg className="h-[22px] w-[22px]" viewBox="0 0 22 22">
    <circle cx="11" cy="11" r="11" fill="#fff" />
    <g strokeWidth="2.600" strokeLinecap="round">
      <path d="M5 9h4M9 5v.1" stroke="#36c5f0" />
      <path d="M13 5v4M17 9h-.1" stroke="#2eb67d" />
      <path d="M13 13h4M13 17v-.1" stroke="#ecb22e" />
      <path d="M9 13v4M5 13h.1" stroke="#e01e5a" />
    </g>
  </svg>
);

const MoviesIcon = () => (
  <svg className="h-6 w-6" viewBox="0 0 24 24">
    <path d="M0 3 23 0v6L0 8Z" fill="#1b8fe0" /><path d="m6 2.200 5-.6-3 5.600-5 .5ZM16 1l5-.7-3 6-5 .5Z" fill="#7fd6f7" />
    <rect x="0" y="7.500" width="24" height="16" rx="1.500" fill="#1767cf" /><path d="m9.500 10 8 5-8 5.500Z" fill="#fff" />
  </svg>
);

const NotepadIcon = () => (
  <svg className="h-[22px] w-6" viewBox="0 0 24 22">
    <path d="m20 1 2.500 3-5 17L14 18Z" fill="#e9dccb" />
    <path d="M8 1h13l-5 17-14-2Z" fill="#7fb3b6" /><path d="M8 1h7L8 16.500 2 16Z" fill="#b4d6d6" />
    <path d="m1 16 14 2 2.500 3L3 19Z" fill="#eef2f2" /><path d="M8 1h13" stroke="#ddd" strokeWidth="1.200" />
  </svg>
);

const PhotosIcon = () => (
  <svg className="h-[22px] w-[22px]" viewBox="0 0 22 22">
    <rect width="22" height="22" fill="#1878dc" /><path d="m10 16 7-6 5 5v7H8Z" fill="#2b56a6" /><path d="m8 6 8 8-8 8H0v-8Z" fill="#0e3a86" /><circle cx="15" cy="4.800" r="2" fill="#fff" />
  </svg>
);

const SkypeIcon = () => (
  <FaSkype className="h-[22px] w-[22px] rounded-[9px] bg-[radial-gradient(circle,#fff_8px,transparent_8.5px)] text-[#159fe0]" />
);

const apps = [
  { icon: <TaskViewIcon /> },
  { icon: <ExplorerIcon />, open: true },
  { icon: <SnipIcon /> },
  { icon: <ChromeIcon />, active: true },
  { icon: <MonitorIcon /> },
  { icon: <PlayerIcon />, open: true },
  { icon: <ConsoleIcon /> },
  { icon: <GitIcon /> },
  { icon: <UbuntuIcon /> },
  { icon: <SlackIcon />, open: true },
  { icon: <SkypeIcon />, open: true },
  { icon: <BiLogoVisualStudio className="h-7 w-7 text-[#2496e8]" />, open: true },
  { icon: <MoviesIcon />, open: true },
  { icon: <NotepadIcon />, open: true },
  { icon: <PhotosIcon />, open: true },
];

function Taskbar() {
  return (
    <div className="flex h-10 items-center bg-[linear-gradient(to_right,#05222b_0%,#0b272f_25%,#102429_45%,#0c2930_60%,#07252d_78%,#063532_86%,#12302f_91%,#2a332c_94%,#152a2f_97%,#12272d_100%)] text-white">
      <div className="flex w-12 justify-center"><FaWindows className="h-4 w-4" /></div>
      <div className="flex h-10 w-[288px] items-center border border-[#56757b] bg-[#325a62] pl-[11px] text-sm text-[#dfe8ea]">
        <svg className="h-[17px] w-[17px]" viewBox="0 0 17 17"><circle cx="10.500" cy="6.200" r="5.200" stroke="#fff" strokeWidth="1.200" fill="none" /><path d="M6.800 9.900.8 16" stroke="#fff" strokeWidth="1.200" /></svg>
        <span className="ml-[11px] pt-px">Type to search</span>
        <span className="ml-auto mr-[2px]"><Donuts /></span>
      </div>
      <div className="ml-px flex">
        {apps.map((a, i) => (
          <div key={i} className={`flex h-10 flex-col items-center ${a.active ? "ml-px w-12 bg-[#04606f]" : "w-[49px]"}`}>
            <div className="flex h-[38px] items-center pt-px">{a.icon}</div>
            {(a.open || a.active) && <i className={`h-[2px] bg-[#9be8fb] ${a.active ? "w-full" : "w-10"}`} />}
          </div>
        ))}
      </div>
      <div className="ml-[39px] flex items-center">
        <svg className="h-[7px] w-3" viewBox="0 0 12 7"><path d="m.5 6.500 5.500-5.500 5.500 5.500" stroke="#fff" strokeWidth="1.200" fill="none" /></svg>
        <svg className="ml-[10px] h-3 w-4" viewBox="0 0 16 12">
          <path d="M5.500 2.500h9v7h-8M14.500 4.500H16v3h-1.500" stroke="#fff" fill="none" /><rect x="7" y="4" width="6" height="4" fill="#fff" />
          <path d="M1 0v2M4 0v2M.5 2.500h4v2l-1 1h-2l-1-1ZM2.500 5.500v4h3" stroke="#fff" fill="none" />
        </svg>
        <svg className="ml-2 h-[14px] w-[17px]" viewBox="0 0 17 14">
          <path d="M.5 5h2.500l3.500-3.500v11L3 9H.5Z" stroke="#fff" fill="none" /><path d="M9 5c1 1 1 3 0 4M11.300 3c2 2 2 6 0 8M13.600 1c3 3 3 9 0 12" stroke="#fff" fill="none" />
        </svg>
        <svg className="ml-[10px] h-[13px] w-[13px]" viewBox="0 0 13 13">
          <path d="M1 12C1 6 6 1 12.500 1M3.500 12.500c0-5 4-9 9-9M6 12.500C6 9 9 6 12.500 6M8.500 12.500c0-2 2-4 4-4" stroke="#e6ecec" fill="none" /><circle cx="11.500" cy="11.500" r="1.300" fill="#fff" />
        </svg>
        <svg className="ml-2 h-[11px] w-4" viewBox="0 0 16 11"><path d="M4 10.500a3.500 3.500 0 0 1-.4-7 5 5 0 0 1 9 1.500 2.900 2.900 0 0 1 .2 5.500Z" fill="#f2f2f2" /><path d="m3 4 8 6.500H4A3.500 3.500 0 0 1 3 4Z" fill="#c9cfd0" /></svg>
        <svg className="ml-[11px] h-[17px] w-3" viewBox="0 0 12 17"><rect x=".6" y="5" width="7.800" height="7" rx="1.200" stroke="#fff" fill="none" strokeWidth="1.200" /><path d="M8.400 7.500 11 6v5L8.400 9.500M1.500 2.500c1.500-2.500 5.500-2.500 7 0M1.500 14.500c1.500 2.500 5.500 2.500 7 0" stroke="#fff" fill="none" /></svg>
        <div className="ml-[12px] flex w-[50px] flex-col items-center text-xs leading-[18px]">
          <span className="tracking-[-0.41px]">9:19 PM</span>
          <span className="tracking-[-0.5px]">6/2/2023</span>
        </div>
        <div className="relative ml-[19px] mt-[8px] h-[26px] w-[26px]">
          <svg className="h-4 w-4" viewBox="0 0 16 16"><path d="M0 0h16v13H6l-3 3v-3H0Z" fill="#fff" /><path d="M3 3.500h10M3 6.500h10M3 9.500h7" stroke="#12272d" /></svg>
          <span className="absolute left-[5px] top-[7px] flex h-[19px] w-5 items-center justify-center rounded-full border border-[#58a0a8] bg-[#0d5560] text-[11px] font-semibold leading-none tracking-tight">23</span>
        </div>
      </div>
      <i className="ml-auto mr-1 h-10 w-px bg-[#67787b]" />
    </div>
  );
}

export default function App() {
  return (
    <div className={`h-[768px] w-[1366px] overflow-hidden bg-white ${ui}`}>
      <TabStrip />
      <Toolbar />
      <Bookmarks />
      <AwsHeader />
      <div className="flex h-[584px]">
        <SideNav />
        <Main />
      </div>
      <Taskbar />
    </div>
  );
}
